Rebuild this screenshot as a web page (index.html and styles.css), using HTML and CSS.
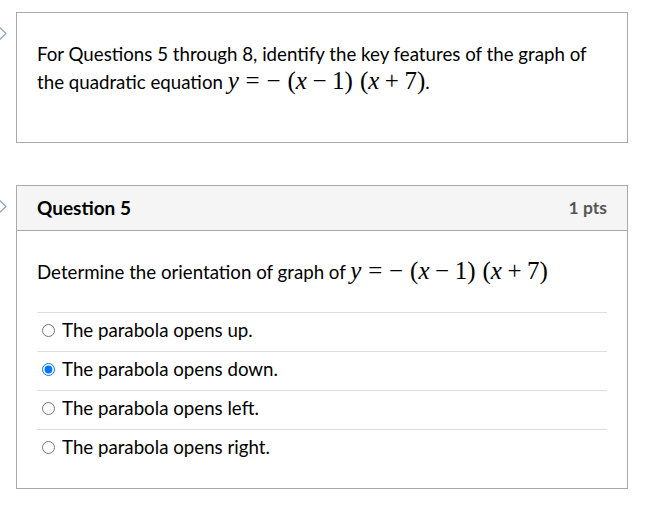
FILE: index.html
```html
<!DOCTYPE html>
<html>
<head>
<meta charset="utf-8">
<link rel="stylesheet" href="styles.css">
</head>
<body>
<div class="page">
  <div class="row">
    <div class="gutter"><svg class="chev" width="16" height="18" viewBox="0 0 16 18"><path d="M-2 1 L6 8.5 L-2 16" fill="none" stroke="#8aa6c4" stroke-width="1.2" stroke-linejoin="round"/></svg></div>
    <div class="card text-card">
      <p class="intro">For Questions 5 through 8, identify the key features of the graph of the quadratic equation <span class="math"><i>y</i><span class="rel">=</span>−<span class="sp"></span>(<i>x</i><span class="bin">−</span>1)<span class="sp"></span>(<i>x</i><span class="bin">+</span>7)</span>.</p>
    </div>
  </div>
  <div class="row q-row">
    <div class="gutter"><svg class="chev" width="16" height="18" viewBox="0 0 16 18"><path d="M-2 1 L6 8.5 L-2 16" fill="none" stroke="#8aa6c4" stroke-width="1.2" stroke-linejoin="round"/></svg></div>
    <div class="card question">
      <div class="q-header">
        <span class="q-title">Question 5</span>
        <span class="q-pts">1 pts</span>
      </div>
      <div class="q-body">
        <p class="q-text">Determine the orientation of graph of <span class="math"><i>y</i><span class="rel">=</span>−<span class="sp"></span>(<i>x</i><span class="bin">−</span>1)<span class="sp"></span>(<i>x</i><span class="bin">+</span>7)</span></p>
        <div class="answers">
          <label class="answer"><input type="radio" name="q5">The parabola opens up.</label>
          <label class="answer"><input type="radio" name="q5" checked>The parabola opens down.</label>
          <label class="answer"><input type="radio" name="q5">The parabola opens left.</label>
          <label class="answer"><input type="radio" name="q5">The parabola opens right.</label>
        </div>
      </div>
    </div>
  </div>
</div>
</body>
</html>
```
FILE: styles.css
```css
html, body {
  margin: 0;
  padding: 0;
  background: #fff;
}
body {
  font-family: Lato, "Helvetica Neue", Arial, sans-serif;
  color: #000;
  font-size: 18.7px;
}
.page {
  width: 628px;
  padding-top: 12px;
}
.row {
  display: flex;
  align-items: flex-start;
}
.q-row {
  margin-top: 42px;
}
.gutter {
  width: 16px;
  flex: none;
}
.chev {
  display: block;
  margin-top: 13px;
}
.card {
  flex: 1;
  border: 1px solid #a9a9a9;
  box-sizing: border-box;
}
.text-card {
  height: 131px;
  padding: 27px 20px 0 20px;
}
.intro {
  margin: 0;
  line-height: 28px;
}
.math {
  font-family: "Liberation Serif", "Times New Roman", serif;
  font-size: 25px;
  line-height: 1;
  white-space: nowrap;
}
.math i {
  font-style: italic;
}
.math .rel {
  padding: 0 0.27em;
}
.math .bin {
  padding: 0 0.22em;
}
.math .sp {
  display: inline-block;
  width: 0.28em;
}
.q-header {
  display: flex;
  justify-content: space-between;
  align-items: center;
  height: 45px;
  box-sizing: border-box;
  padding: 0 20px 2px 20px;
  background: #f5f5f5;
  border-bottom: 1px solid #a9a9a9;
  font-weight: 700;
}
.q-title {
  font-size: 19px;
}
.q-pts {
  color: #555;
  font-size: 17.5px;
}
.q-body {
  padding: 27px 20px 20px 20px;
}
.q-text {
  margin: 0 0 26px 0;
  line-height: 28px;
}
.answers {
  display: flex;
  flex-direction: column;
}
.answer {
  display: flex;
  align-items: center;
  height: 39px;
  box-sizing: border-box;
  padding-bottom: 5px;
  border-top: 1px solid #ddd;
}
.answer input {
  margin: 1px 7px 0 5px;
  width: 13px;
  height: 13px;
  flex: none;
}
```
